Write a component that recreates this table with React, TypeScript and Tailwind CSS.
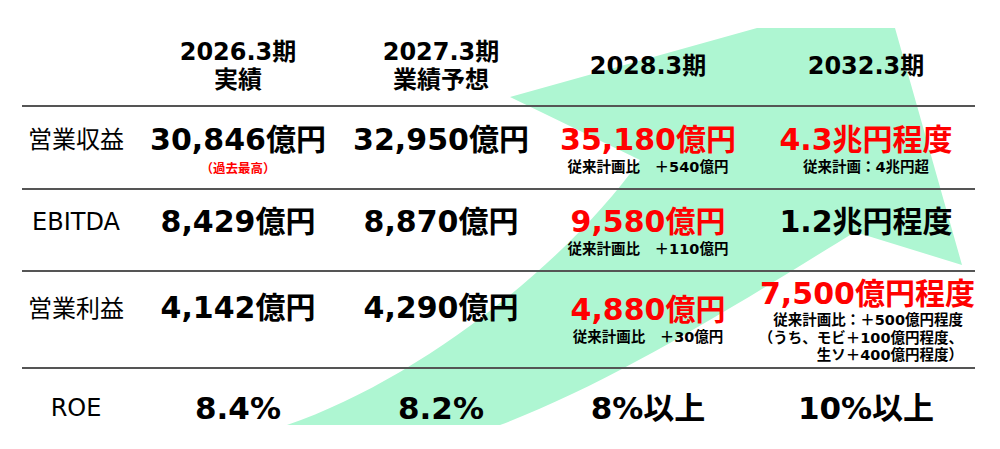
import { JSX } from 'react'

type Cell = {
  value: string
  red?: boolean
  sub?: string
  note?: string
}

type Row = {
  label: string
  height: string
  pad: string
  cells: Cell[]
}

const FONT = "font-['DejaVu_Sans','Noto_Sans_CJK_JP',sans-serif]"

// 行データ
const ROWS: Row[] = [
  {
    label: '営業収益',
    height: 'h-[83px]',
    pad: 'pt-[15px]',
    cells: [
      { value: '30,846億円', sub: '（過去最高）' },
      { value: '32,950億円' },
      { value: '35,180億円', red: true, note: '従来計画比　＋540億円' },
      { value: '4.3兆円程度', red: true, note: '従来計画：4兆円超' },
    ],
  },
  {
    label: 'EBITDA',
    height: 'h-[82px]',
    pad: 'pt-[14px]',
    cells: [
      { value: '8,429億円' },
      { value: '8,870億円' },
      { value: '9,580億円', red: true, note: '従来計画比　＋110億円' },
      { value: '1.2兆円程度' },
    ],
  },
]

const GRID = 'grid grid-cols-[108px_216px_190px_224px_212px]'

function Arrow(): JSX.Element {
  return (
    <svg className="absolute inset-0" width="1000" height="449" viewBox="0 0 1000 449">
      <path
        d="M 287 425 C 420 380, 570 260, 640 160 L 510 97 L 757 28 L 895 28 L 962 265 L 855 232 C 760 290, 620 380, 500 425 Z"
        fill="#aef6d2"
      />
    </svg>
  )
}

function Value({ cell }: { cell: Cell }): JSX.Element {
  return (
    <div className="flex flex-col items-center">
      <span className={`text-[30px] leading-[36px] font-bold whitespace-nowrap ${cell.red ? 'text-[#ff0000]' : 'text-black'}`}>
        {cell.value}
      </span>
      {cell.sub && (
        <span className="text-[12.5px] leading-[18px] mt-[2px] font-bold text-[#ff0000] whitespace-nowrap">{cell.sub}</span>
      )}
      {cell.note && (
        <span className="text-[14.5px] leading-[18px] font-bold text-black whitespace-nowrap">{cell.note}</span>
      )}
    </div>
  )
}

export default function App(): JSX.Element {
  return (
    <div className={`w-[1000px] h-[449px] relative bg-white overflow-hidden ${FONT}`}>
      <Arrow />

      <div className="relative pl-[22px] pr-[25px]">
        {/* ヘッダー */}
        <div className={`${GRID} h-[105px] pt-[26px] items-center text-black font-bold text-[24px] leading-[28px] text-center`}>
          <span />
          <div className="flex flex-col">
            <span>2026.3期</span>
            <span>実績</span>
          </div>
          <div className="flex flex-col">
            <span>2027.3期</span>
            <span>業績予想</span>
          </div>
          <span>2028.3期</span>
          <span>2032.3期</span>
        </div>

        {ROWS.map((row) => (
          <div key={row.label} className={`${GRID} ${row.height} ${row.pad} border-t-2 border-[#555] items-start`}>
            <span className="text-[24px] leading-[36px] text-black text-center">{row.label}</span>
            {row.cells.map((cell) => (
              <Value key={cell.value} cell={cell} />
            ))}
          </div>
        ))}

        {/* 営業利益 */}
        <div className={`${GRID} h-[97px] border-t-2 border-[#555] items-start`}>
          <span className="pt-[19px] text-[24px] leading-[36px] text-black text-center">営業利益</span>
          <div className="pt-[18px]"><Value cell={{ value: '4,142億円' }} /></div>
          <div className="pt-[18px]"><Value cell={{ value: '4,290億円' }} /></div>
          <div className="pt-[20px]"><Value cell={{ value: '4,880億円', red: true, note: '従来計画比　＋30億円' }} /></div>
          <div className="pt-[4px] flex flex-col">
            <span className="text-[30px] leading-[36px] font-bold text-[#ff0000] text-center whitespace-nowrap">7,500億円程度</span>
            <div className="flex flex-col items-end pr-[9px] text-[14.5px] leading-[17.5px] font-bold text-black whitespace-nowrap">
              <span>従来計画比：＋500億円程度</span>
              <span>（うち、モビ＋100億円程度、</span>
              <span>生ソ＋400億円程度）</span>
            </div>
          </div>
        </div>

        {/* ROE */}
        <div className={`${GRID} h-[82px] pt-[21px] border-t-2 border-[#555] items-start text-center`}>
          <span className="text-[24px] leading-[36px] text-black">ROE</span>
          <span className="text-[31px] leading-[36px] font-bold text-black">8.4%</span>
          <span className="text-[31px] leading-[36px] font-bold text-black">8.2%</span>
          <span className="text-[31px] leading-[36px] font-bold text-black">8%以上</span>
          <span className="text-[31px] leading-[36px] font-bold text-black">10%以上</span>
        </div>
      </div>
    </div>
  )
}
